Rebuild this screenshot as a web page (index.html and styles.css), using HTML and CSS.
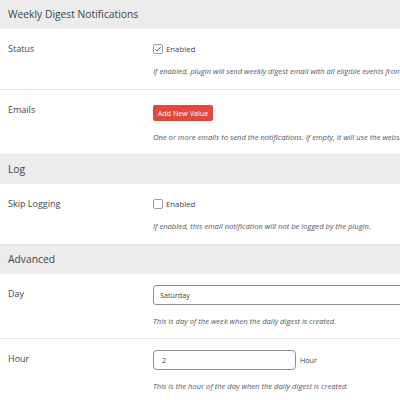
FILE: index.html
```html
<!DOCTYPE html>
<html lang="en">
<head>
  <meta charset="UTF-8">
  <link rel="stylesheet" href="styles.css">
</head>
<body>
<div class="settings">
    <h2 class="sectionTitle">Weekly Digest Notifications</h2>
    <div class="row">
        <div class="label">Status</div>
        <div class="field">
            <label class="check">
                <span class="box">
                    <svg width="8" height="8" viewBox="0 0 10 10"><path d="M1.5 5.2 L4 7.6 L8.6 2.2" fill="none" stroke="#50575e" stroke-width="1.2"/></svg>
                </span>
                Enabled
            </label>
            <p class="desc">If enabled, plugin will send weekly digest email with all eligible events from the website.</p>
        </div>
    </div>
    <div class="row">
        <div class="label">Emails</div>
        <div class="field">
            <button class="addButton">Add New Value</button>
            <p class="desc">One or more emails to send the notifications. If empty, it will use the website admin email.</p>
        </div>
    </div>

    <h2 class="sectionTitle">Log</h2>
    <div class="row">
        <div class="label">Skip Logging</div>
        <div class="field">
            <label class="check">
                <span class="box"></span>
                Enabled
            </label>
            <p class="desc">If enabled, this email notification will not be logged by the plugin.</p>
        </div>
    </div>

    <h2 class="sectionTitle">Advanced</h2>
    <div class="row">
        <div class="label">Day</div>
        <div class="field">
            <div class="select">Saturday</div>
            <p class="desc">This is day of the week when the daily digest is created.</p>
        </div>
    </div>
    <div class="row">
        <div class="label">Hour</div>
        <div class="field">
            <div class="horizontal">
                <div class="input">2</div>
                <span class="unit">Hour</span>
            </div>
            <p class="desc">This is the hour of the day when the daily digest is created.</p>
        </div>
    </div>
</div>
</body>
</html>
```

FILE: styles.css
```css
body {
    margin: 0;
    padding: 0;
    font-family: 'Open Sans', sans-serif;
    color: #3c434a;
    background: #fff;
}
.settings {
    width: 400px;
    height: 400px;
    overflow: hidden;
}
.sectionTitle {
    margin: 0;
    height: 29px;
    line-height: 29px;
    padding: 0 8px;
    background-color: #ececec;
    font-size: 10.3px;
    font-weight: 400;
    color: #3c434a;
}
.row {
    display: grid;
    grid-template-columns: 145px 1fr;
    padding: 14px 0 0 8px;
    border-bottom: 1px solid #e3e3e3;
}
.row:last-child {
    border-bottom: none;
}
.label {
    font-size: 9px;
    line-height: 12px;
}
.field {
    white-space: nowrap;
}
.check {
    display: flex;
    align-items: center;
    font-size: 7.8px;
    height: 12px;
}
.box {
    display: inline-flex;
    justify-content: center;
    align-items: center;
    width: 8px;
    height: 8px;
    border: 1px solid #9a9da1;
    border-radius: 2px;
    margin-right: 3px;
}
.desc {
    margin: 0;
    padding: 11px 0 12.5px;
    font-size: 7.6px;
    font-style: italic;
    color: #50575e;
    line-height: 10px;
}
.addButton {
    display: block;
    background-color: #e2483d;
    color: #fff;
    border: none;
    border-radius: 2px;
    font-family: 'Open Sans', sans-serif;
    font-size: 7.2px;
    height: 16px;
    width: 60px;
    padding: 0;
    margin-top: 1px;
}
.select {
    box-sizing: border-box;
    height: 20px;
    width: 260px;
    border: 1px solid #8c8f94;
    border-radius: 3px;
    font-size: 7.2px;
    line-height: 18px;
    padding-left: 6px;
    margin-top: -3px;
}
.horizontal {
    display: flex;
    align-items: center;
    margin-top: -3px;
}
.input {
    box-sizing: border-box;
    height: 20px;
    width: 143px;
    border: 1px solid #8c8f94;
    border-radius: 4px;
    font-size: 7.2px;
    line-height: 18px;
    padding-left: 8px;
}
.unit {
    font-size: 7.2px;
    margin-left: 4px;
}
```
